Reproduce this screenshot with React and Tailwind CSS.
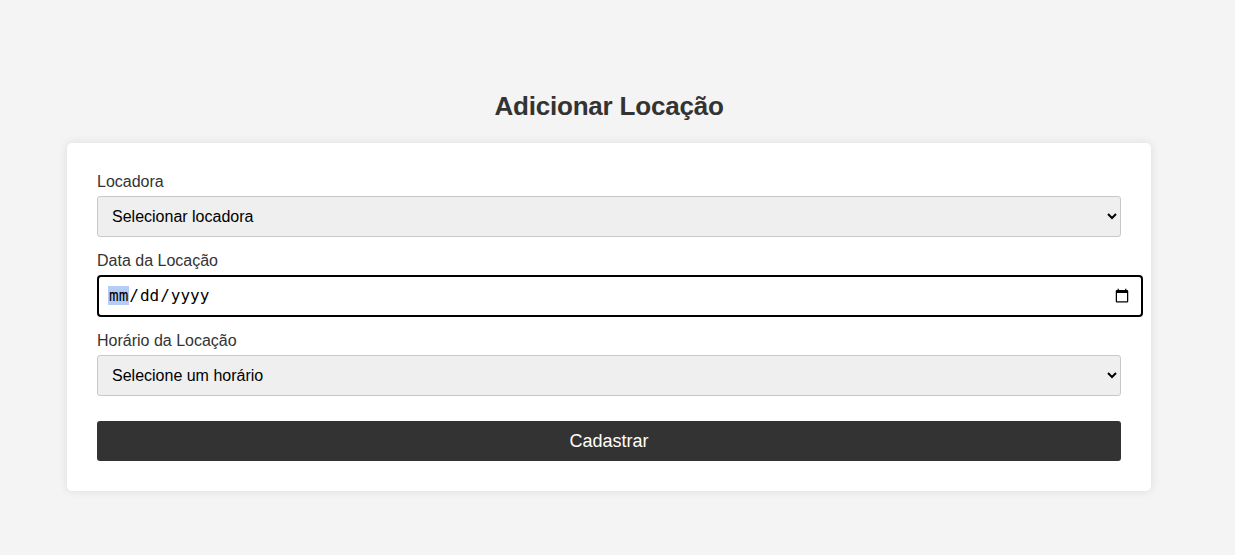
import React from "react";

const App = () => {
  return (
    <div className="min-h-[555px] w-full bg-[#f4f4f4] font-['Liberation_Sans',Arial,sans-serif] text-[#333]">
      <div className="w-[1218px] flex flex-col items-center pt-[90px]">
        <h2 className="text-[26px] leading-[32px] font-bold text-[#333] mb-[21px] tracking-[-0.2px]">
          Adicionar Locação
        </h2>
        <form
          className="w-[1084px] bg-white rounded-[5px] shadow-[0_0_10px_rgba(0,0,0,0.1)] p-[30px]"
          onSubmit={(e) => e.preventDefault()}
        >
          <label className="block text-[16px] leading-[18px] mb-[5px]">Locadora</label>
          <select className="block w-[1024px] h-[41px] bg-[#efefef] border border-[#c8c8c8] rounded-[3px] px-[10px] text-[16px] text-black mb-[15px] appearance-auto">
            <option>Selecionar locadora</option>
          </select>

          <label className="block text-[16px] leading-[18px] mb-[5px]">Data da Locação</label>
          <input
            type="date"
            className="block w-[1046px] h-[42px] border-2 border-black rounded-[4px] px-[9px] text-[16px] text-black font-['DejaVu_Sans_Mono',monospace] outline-none mb-[15px] [&::-webkit-datetime-edit-month-field]:bg-[#b4cdf7] [&::-webkit-datetime-edit-month-field]:text-black"
          />

          <label className="block text-[16px] leading-[18px] mb-[5px]">Horário da Locação</label>
          <select className="block w-[1024px] h-[41px] bg-[#efefef] border border-[#c8c8c8] rounded-[3px] px-[10px] text-[16px] text-black appearance-auto">
            <option>Selecione um horário</option>
          </select>

          <button
            type="submit"
            className="block w-[1024px] h-[40px] mt-[25px] bg-[#333] text-white text-[18px] rounded-[3px]"
          >
            Cadastrar
          </button>
        </form>
      </div>
    </div>
  );
};

export default App;
